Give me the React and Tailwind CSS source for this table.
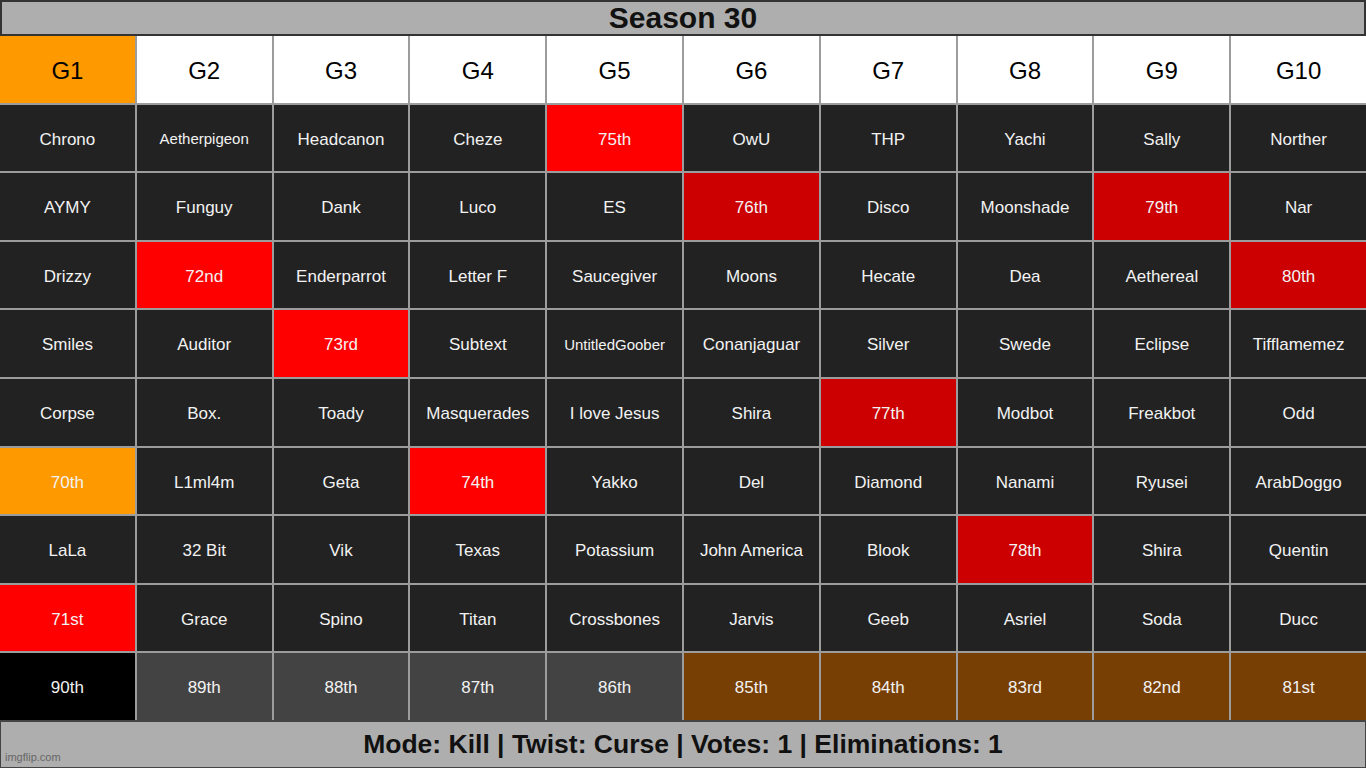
const HEADERS = ['G1', 'G2', 'G3', 'G4', 'G5', 'G6', 'G7', 'G8', 'G9', 'G10']

// r = red, d = dark red, o = orange, b = black, g = gray, n = brown, s = small text
const ROWS = [
  ['Chrono', 'Aetherpigeon:s', 'Headcanon', 'Cheze', '75th:r', 'OwU', 'THP', 'Yachi', 'Sally', 'Norther'],
  ['AYMY', 'Funguy', 'Dank', 'Luco', 'ES', '76th:d', 'Disco', 'Moonshade', '79th:d', 'Nar'],
  ['Drizzy', '72nd:r', 'Enderparrot', 'Letter F', 'Saucegiver', 'Moons', 'Hecate', 'Dea', 'Aethereal', '80th:d'],
  ['Smiles', 'Auditor', '73rd:r', 'Subtext', 'UntitledGoober:s', 'Conanjaguar', 'Silver', 'Swede', 'Eclipse', 'Tifflamemez'],
  ['Corpse', 'Box.', 'Toady', 'Masquerades', 'I love Jesus', 'Shira', '77th:d', 'Modbot', 'Freakbot', 'Odd'],
  ['70th:o', 'L1ml4m', 'Geta', '74th:r', 'Yakko', 'Del', 'Diamond', 'Nanami', 'Ryusei', 'ArabDoggo'],
  ['LaLa', '32 Bit', 'Vik', 'Texas', 'Potassium', 'John America', 'Blook', '78th:d', 'Shira', 'Quentin'],
  ['71st:r', 'Grace', 'Spino', 'Titan', 'Crossbones', 'Jarvis', 'Geeb', 'Asriel', 'Soda', 'Ducc'],
  ['90th:b', '89th:g', '88th:g', '87th:g', '86th:g', '85th:n', '84th:n', '83rd:n', '82nd:n', '81st:n'],
]

const BG = {
  r: 'bg-[#ff0000]',
  d: 'bg-[#cc0000]',
  o: 'bg-[#ff9900]',
  b: 'bg-black',
  g: 'bg-[#434343]',
  n: 'bg-[#783f04]',
}

function Cell({ value }) {
  const [text, tag] = value.split(':')
  const bg = BG[tag] ?? 'bg-[#222222]'
  const size = tag === 's' ? 'text-[15px]' : 'text-[17px]'
  return (
    <div className={`${bg} ${size} flex items-center justify-center pt-[3px] text-[#f2f2f2] whitespace-nowrap`}>
      {text}
    </div>
  )
}

export default function App() {
  return (
    <div className="w-[1366px] h-[768px] flex flex-col bg-[#aeaeae] font-['Liberation_Sans',Arial,sans-serif] overflow-hidden">
      <div className="h-[36px] shrink-0 border-2 border-[#333333] bg-[#aeaeae] flex items-center justify-center">
        <h1 className="text-[30px] font-bold text-[#111111] leading-none">Season 30</h1>
      </div>

      <div className="flex-1 grid grid-cols-10 grid-rows-10 gap-[2px] bg-[#9c9c9c] border-b-2 border-[#444444]">
        {HEADERS.map((h, i) => (
          <div key={h}
            className={`${i === 0 ? 'bg-[#ff9900]' : 'bg-white'} flex items-center justify-center pt-[3px] text-[24px] text-black`}>
            {h}
          </div>
        ))}
        {ROWS.flat().map((v, i) => <Cell key={i} value={v} />)}
      </div>

      <div className="relative h-[46px] shrink-0 border border-[#444444] border-t-0 bg-[#aeaeae] flex items-center justify-center">
        <p className="text-[26.5px] font-bold text-[#111111] leading-none">
          Mode: Kill | Twist: Curse | Votes: 1 | Eliminations: 1
        </p>
        <span className="absolute left-[4px] bottom-[2px] text-[11px] text-[#666666]">imgflip.com</span>
      </div>
    </div>
  )
}
